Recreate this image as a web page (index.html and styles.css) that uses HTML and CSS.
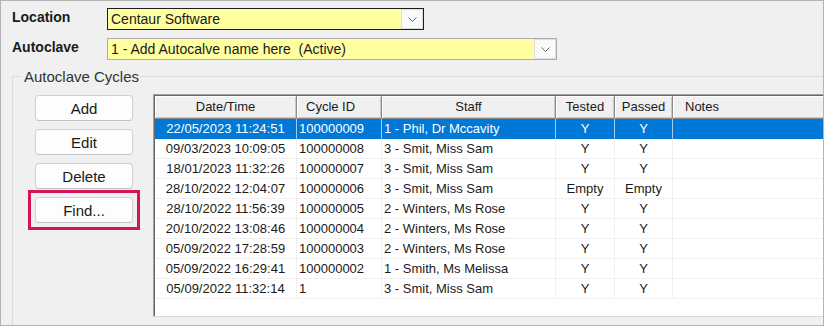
FILE: index.html
```html
<!DOCTYPE html>
<html>
<head>
    <link rel="stylesheet" href="styles.css">
</head>
<body>
<div class="window">
    <div class="field-row">
        <label class="field-label">Location</label>
        <div class="combo combo-focused location">
            <span class="combo-text">Centaur Software</span>
            <span class="combo-button"><svg width="9" height="5" viewBox="0 0 9 5"><polyline points="0.5,0.5 4.5,4.5 8.5,0.5" fill="none" stroke="#6b6b6b" stroke-width="1"/></svg></span>
        </div>
    </div>
    <div class="field-row">
        <label class="field-label">Autoclave</label>
        <div class="combo autoclave">
            <span class="combo-text">1 - Add Autocalve name here  (Active)</span>
            <span class="combo-button"><svg width="9" height="5" viewBox="0 0 9 5"><polyline points="0.5,0.5 4.5,4.5 8.5,0.5" fill="none" stroke="#6b6b6b" stroke-width="1"/></svg></span>
        </div>
    </div>

    <fieldset class="cycles">
        <legend>Autoclave Cycles</legend>
        <div class="cycles-body">
            <div class="button-column">
                <button class="action">Add</button>
                <button class="action">Edit</button>
                <button class="action">Delete</button>
                <div class="highlight">
                    <button class="action">Find...</button>
                </div>
            </div>
            <div class="grid">
                <table class="cycle-table">
                    <colgroup>
                        <col class="col-date">
                        <col class="col-id">
                        <col class="col-staff">
                        <col class="col-tested">
                        <col class="col-passed">
                        <col>
                    </colgroup>
                    <thead>
                        <tr>
                            <th>Date/Time</th>
                            <th class="th-left id-head">Cycle ID</th>
                            <th>Staff</th>
                            <th>Tested</th>
                            <th>Passed</th>
                            <th class="th-left notes-head">Notes</th>
                        </tr>
                    </thead>
                    <tbody>
                        <tr class="selected">
                            <td class="c">22/05/2023 11:24:51</td><td>100000009</td><td>1 - Phil, Dr Mccavity</td><td class="c">Y</td><td class="c">Y</td><td></td>
                        </tr>
                        <tr>
                            <td class="c">09/03/2023 10:09:05</td><td>100000008</td><td>3 - Smit, Miss Sam</td><td class="c">Y</td><td class="c">Y</td><td></td>
                        </tr>
                        <tr>
                            <td class="c">18/01/2023 11:32:26</td><td>100000007</td><td>3 - Smit, Miss Sam</td><td class="c">Y</td><td class="c">Y</td><td></td>
                        </tr>
                        <tr>
                            <td class="c">28/10/2022 12:04:07</td><td>100000006</td><td>3 - Smit, Miss Sam</td><td class="c">Empty</td><td class="c">Empty</td><td></td>
                        </tr>
                        <tr>
                            <td class="c">28/10/2022 11:56:39</td><td>100000005</td><td>2 - Winters, Ms Rose</td><td class="c">Y</td><td class="c">Y</td><td></td>
                        </tr>
                        <tr>
                            <td class="c">20/10/2022 13:08:46</td><td>100000004</td><td>2 - Winters, Ms Rose</td><td class="c">Y</td><td class="c">Y</td><td></td>
                        </tr>
                        <tr>
                            <td class="c">05/09/2022 17:28:59</td><td>100000003</td><td>2 - Winters, Ms Rose</td><td class="c">Y</td><td class="c">Y</td><td></td>
                        </tr>
                        <tr>
                            <td class="c">05/09/2022 16:29:41</td><td>100000002</td><td>1 - Smith, Ms Melissa</td><td class="c">Y</td><td class="c">Y</td><td></td>
                        </tr>
                        <tr>
                            <td class="c">05/09/2022 11:32:14</td><td>1</td><td>3 - Smit, Miss Sam</td><td class="c">Y</td><td class="c">Y</td><td></td>
                        </tr>
                    </tbody>
                </table>
            </div>
        </div>
    </fieldset>
</div>
</body>
</html>
```

FILE: styles.css
```css
* {
    box-sizing: border-box;
}
body {
    margin: 0;
    font-family: "Liberation Sans", Arial, sans-serif;
    color: #1a1a1a;
}
.window {
    width: 824px;
    height: 326px;
    border: 1px solid #b4b4b4;
    background-color: #f0f0f0;
    overflow: hidden;
    padding: 7px 0 0 11px;
}
.field-row {
    display: flex;
    align-items: flex-start;
    height: 22px;
}
.field-row + .field-row {
    margin-top: 8px;
}
.field-label {
    width: 95px;
    font-size: 14px;
    font-weight: bold;
    line-height: 16px;
    padding-top: 1px;
}
.combo {
    display: flex;
    height: 22px;
    background-color: #ffffa0;
    border: 1px solid #acacac;
}
.combo-focused {
    border-color: #1e1e1e;
}
.location {
    width: 317px;
}
.autoclave {
    width: 450px;
}
.combo-text {
    flex: 1;
    font-size: 14px;
    line-height: 20px;
    padding-left: 3px;
    white-space: pre;
}
.combo-button {
    width: 22px;
    background-color: #fafafa;
    border: 1px solid #dedede;
    display: flex;
    align-items: center;
    justify-content: center;
}
.cycles {
    margin: 8px -40px 0 0;
    padding: 9px 0 30px 0;
    border: 1px solid #dcdcdc;
    min-width: 0;
}
.cycles legend {
    margin-left: 9px;
    padding: 0 2px;
    font-size: 15px;
    line-height: 17px;
    color: #333;
}
.cycles-body {
    display: flex;
    align-items: flex-start;
}
.button-column {
    display: flex;
    flex-direction: column;
    gap: 8px;
    margin-left: 22px;
    padding-top: 1px;
}
.action {
    display: block;
    width: 98px;
    height: 26px;
    padding: 0;
    font-family: "Liberation Sans", Arial, sans-serif;
    font-size: 15px;
    color: #1a1a1a;
    background-color: #fdfdfd;
    border: 1px solid #d0d0d0;
    border-bottom-color: #c2c2c2;
    border-radius: 4px;
}
.highlight {
    margin: -7px -7px;
    padding: 4px;
    border: 3px solid #d4145a;
}
.grid {
    flex: 1;
    margin-left: 20px;
    height: 223px;
    background-color: #fff;
    border-top: 1px solid #a0a0a0;
    border-left: 1px solid #a0a0a0;
    border-bottom: 1px solid #dadada;
    padding: 1px 0 0 1px;
    box-shadow: inset 1px 1px 0 #696969;
    overflow: hidden;
}
.cycle-table {
    width: 100%;
    table-layout: fixed;
    border-collapse: separate;
    border-spacing: 0;
    font-size: 13px;
}
.col-date { width: 142px; }
.col-id { width: 85px; }
.col-staff { width: 174px; }
.col-tested { width: 59px; }
.col-passed { width: 58px; }
.cycle-table th {
    font-weight: normal;
    line-height: 22px;
    padding: 0;
    text-align: center;
    background-color: #f0f0f0;
    border-right: 1px solid #8c8c8c;
    border-bottom: 1px solid #8c8c8c;
    box-shadow: inset 1px 1px 0 #fff, inset -1px -1px 0 #c8c8c8;
    white-space: nowrap;
}
.cycle-table .th-left {
    text-align: left;
}
.cycle-table .id-head {
    padding-left: 9px;
}
.cycle-table .notes-head {
    padding-left: 12px;
}
.cycle-table td {
    line-height: 19px;
    padding: 0 2px;
    border-right: 1px solid #f0f0f0;
    border-bottom: 1px solid #f0f0f0;
    white-space: nowrap;
    overflow: hidden;
}
.cycle-table td:last-child {
    border-right: none;
}
.cycle-table .c {
    text-align: center;
}
.selected td {
    background-color: #0078d7;
    color: #fff;
    border-right-color: #a9cdf0;
    border-bottom-color: #0078d7;
}
```
